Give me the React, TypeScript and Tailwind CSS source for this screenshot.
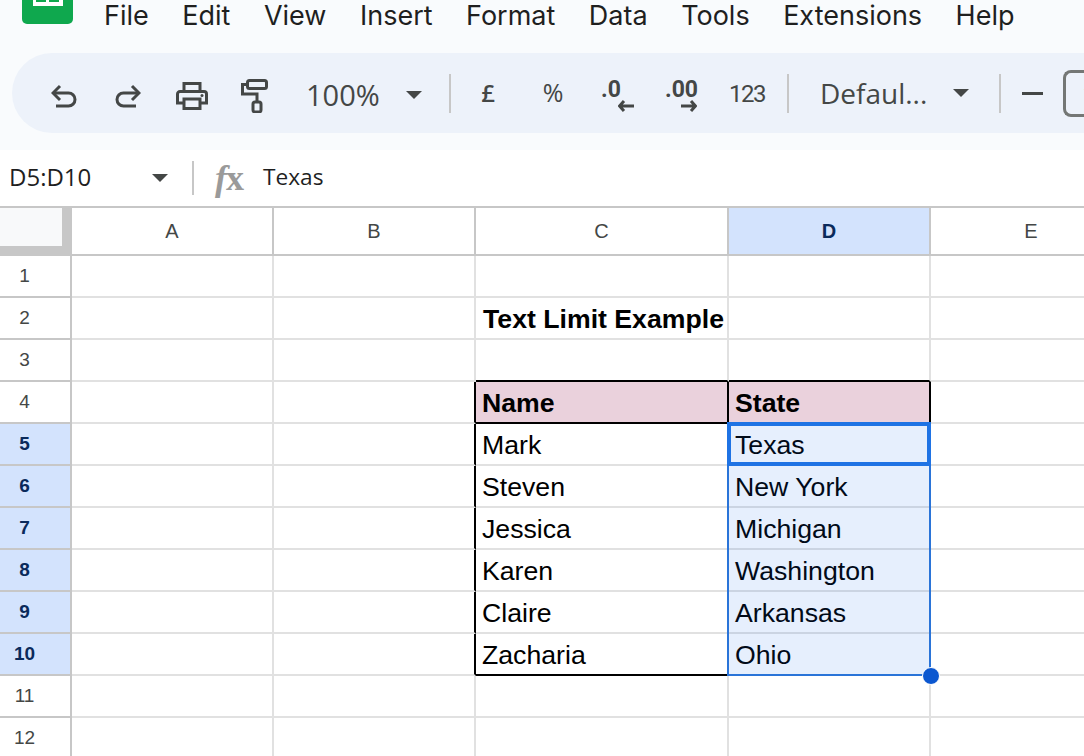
import { ReactNode } from "react";

const columns = ["A", "B", "C", "D", "E"];
const menus = ["File", "Edit", "View", "Insert", "Format", "Data", "Tools", "Extensions", "Help"];

// row number -> text by column
const rows: Record<number, Record<string, string>> = {
  2: { C: "Text Limit Example" },
  4: { C: "Name", D: "State" },
  5: { C: "Mark", D: "Texas" },
  6: { C: "Steven", D: "New York" },
  7: { C: "Jessica", D: "Michigan" },
  8: { C: "Karen", D: "Washington" },
  9: { C: "Claire", D: "Arkansas" },
  10: { C: "Zacharia", D: "Ohio" },
};

function cellClass(col: string, row: number) {
  const inTable = row >= 4 && row <= 10;
  const blackRight = (col === "B" || col === "C" || col === "D") && inTable;
  const blackBottom = (col === "C" || col === "D") && (row === 3 || row === 4 || row === 10);
  return [
    "flex items-end overflow-hidden whitespace-nowrap border-r-2 border-b-2 px-[6px] pb-[2px] text-[26.67px] leading-[34px] text-black",
    blackRight ? "border-r-black" : "border-r-[#e1e1e1]",
    blackBottom ? "border-b-black" : "border-b-[#e1e1e1]",
    row === 4 && (col === "C" || col === "D") ? "bg-[#ead1dc] font-bold" : "",
    row === 2 ? "font-bold pl-[7px]" : "",
  ].join(" ");
}

function Caret({ className = "" }: { className?: string }) {
  return (
    <svg width="16" height="8" viewBox="0 0 16 8" className={`shrink-0 ${className}`}>
      <path d="M0 0h16L8 8z" fill="#444746" />
    </svg>
  );
}

function Divider({ className = "" }: { className?: string }) {
  return <div className={`h-[39px] w-[2px] shrink-0 bg-[#c7c7c7] ${className}`} />;
}

function Slot({ width, children }: { width: string; children: ReactNode }) {
  return <div className={`flex shrink-0 translate-y-[3px] items-center justify-center ${width}`}>{children}</div>;
}

function Toolbar() {
  return (
    <div className="ml-3 mt-[21px] flex h-[80px] items-center rounded-l-[40px] bg-[#edf2fa] pl-[20px] font-['Open_Sans',sans-serif] text-[#444746]">
      <Slot width="w-[64px]">
        <svg width="26" height="24" viewBox="0 0 26 24" fill="none" stroke="#444746" strokeWidth="3">
          <path d="M9 2 2 9l7 7" />
          <path d="M2 9h15.5a6.5 6.5 0 0 1 0 13H5" />
        </svg>
      </Slot>
      <Slot width="w-[64px]">
        <svg width="26" height="24" viewBox="0 0 26 24" fill="none" stroke="#444746" strokeWidth="3">
          <path d="m17 2 7 7-7 7" />
          <path d="M24 9H8.5a6.5 6.5 0 0 0 0 13H21" />
        </svg>
      </Slot>
      <Slot width="w-[64px]">
        <svg width="32" height="28" viewBox="0 0 32 28" fill="none" stroke="#444746" strokeWidth="3">
          <path d="M8 10V1.5h16V10" />
          <path d="M8 21H1.500V12a2.500 2.500 0 0 1 2.500-2.500h24a2.500 2.500 0 0 1 2.500 2.500v9H24" />
          <path d="M8 17h16v9.500H8z" />
          <circle cx="26" cy="13.500" r="1.500" fill="#444746" stroke="none" />
        </svg>
      </Slot>
      <Slot width="w-[60px]">
        <svg width="28" height="34" viewBox="0 0 28 34" fill="none" stroke="#444746" strokeWidth="3">
          <rect x="7.500" y="1.500" width="19" height="8" rx="2" />
          <path d="M7 5.500H2.500v9.500H17v7" />
          <rect x="13" y="23" width="8" height="10" rx="2" />
        </svg>
      </Slot>
      <span className="ml-[22px] w-[74px] shrink-0 translate-y-[1px] text-[29px] leading-none">100%</span>
      <Caret className="ml-[26px] translate-y-[2px]" />
      <Divider className="ml-[27px]" />
      <div className="ml-[17px] w-[40px] shrink-0 text-center text-[24px] font-semibold leading-none">£</div>
      <div className="ml-[25px] w-[40px] shrink-0 -translate-y-[1px] text-center text-[25px] leading-none">%</div>
      <div className="relative ml-[28px] w-[18px] shrink-0 -translate-y-[4px] font-['Roboto',sans-serif] text-[23px] font-bold leading-none">
        <span>.0</span>
        <svg width="16" height="12" viewBox="0 0 16 12" className="absolute left-[17px] top-[22px]" fill="none" stroke="#444746" strokeWidth="3">
          <path d="M6 1 1.500 6 6 11M2 6h14" />
        </svg>
      </div>
      <div className="relative ml-[46px] w-[33px] shrink-0 -translate-y-[4px] font-['Roboto',sans-serif] text-[23px] font-bold leading-none">
        <span>.00</span>
        <svg width="16" height="12" viewBox="0 0 16 12" className="absolute left-[16px] top-[22px]" fill="none" stroke="#444746" strokeWidth="3">
          <path d="m10 1 4.500 5-4.500 5M14 6H0" />
        </svg>
      </div>
      <span className="ml-[31px] w-[36px] shrink-0 translate-y-[1px] font-['Roboto',sans-serif] text-[24px] leading-none tracking-[-1.5px]">123</span>
      <Divider className="ml-[22px]" />
      <span className="ml-[31px] w-[105px] shrink-0 whitespace-nowrap text-[28px] leading-none">Defaul...</span>
      <Caret className="ml-[28px]" />
      <Divider className="ml-[30px]" />
      <div className="ml-[21px] h-[3px] w-[21px] shrink-0 bg-[#444746]" />
      <div className="ml-[20px] h-[47px] w-[40px] shrink-0 rounded-l-[8px] border-[3px] border-r-0 border-[#747775] pl-[16px] text-[24px] leading-[41px]">
        10
      </div>
    </div>
  );
}

function Header() {
  return (
    <div className="h-[150px] overflow-hidden bg-[#f9fbfd]">
      <div className="flex h-[32px] items-start">
        <div className="ml-[22px] flex h-[24px] w-[51px] shrink-0 justify-center rounded-b-[5px] bg-[#0fa84e]">
          <div className="flex h-[6px] w-[30px] justify-center gap-[3px] bg-white">
            <div className="h-[2px] w-[10px] bg-[#0fa84e]" />
            <div className="h-[2px] w-[10px] bg-[#0fa84e]" />
          </div>
        </div>
        <nav className="ml-[31px] flex gap-[33.500px] font-['Inter',sans-serif] text-[27px] leading-[32px] text-[#1f1f1f]">
          {menus.map((m) => (
            <span key={m}>{m}</span>
          ))}
        </nav>
      </div>
      <Toolbar />
    </div>
  );
}

function FormulaBar() {
  return (
    <div className="flex h-[56px] items-center bg-white">
      <span className="ml-[9px] w-[83px] shrink-0 -translate-y-[1px] font-['Open_Sans',sans-serif] text-[24px] leading-none text-[#1f1f1f]">D5:D10</span>
      <Caret className="ml-[60px]" />
      <div className="ml-[24px] h-[34px] w-[2px] shrink-0 bg-[#c7c7c7]" />
      <div className="ml-[21px] flex w-[30px] shrink-0 items-baseline whitespace-nowrap font-['Liberation_Serif',serif] text-[36px] leading-none text-[#9a9a9a]">
        <i className="font-bold">f</i>
        <b className="-ml-[1px]">x</b>
      </div>
      <span className="ml-[18px] -translate-y-[1px] font-['Open_Sans',sans-serif] text-[22.700px] leading-none text-[#1f1f1f]">Texas</span>
    </div>
  );
}

function Grid() {
  const rowNumbers = Array.from({ length: 12 }, (_, i) => i + 1);
  return (
    <div className="relative grid grid-cols-[72px_202px_202px_253px_202px_202px] grid-rows-[48px_repeat(12,42px)] border-t-2 border-[#c7c7c7] bg-white font-['Liberation_Sans',sans-serif]">
      <div className="border-r-[10px] border-b-[10px] border-[#c7c7c7] bg-[#f8f9fa]" />
      {columns.map((c) => (
        <div
          key={c}
          className={`flex items-center justify-center border-b-2 border-r-2 border-[#c7c7c7] text-[20px] ${
            c === "D" ? "bg-[#d3e3fd] font-bold text-[#0a2a5b]" : "text-[#444746]"
          }`}
        >
          {c}
        </div>
      ))}
      {rowNumbers.map((r) => {
        const selected = r >= 5 && r <= 10;
        return [
          <div
            key={`h${r}`}
            className={`flex items-center justify-center border-b-2 border-r-2 border-[#c7c7c7] pr-[21px] text-[19px] ${
              selected ? "bg-[#d3e3fd] font-bold text-[#0a2a5b]" : "text-[#444746]"
            }`}
          >
            {r}
          </div>,
          ...columns.map((c) => (
            <div key={`${c}${r}`} className={cellClass(c, r)}>
              {rows[r]?.[c]}
            </div>
          )),
        ];
      })}
      {/* selected range, active cell and fill handle sit over the cells */}
      <div className="pointer-events-none absolute left-[727px] top-[214px] h-[254px] w-[204px] border-2 border-[#2a74d8] bg-[#0e65eb]/10" />
      <div className="pointer-events-none absolute left-[727px] top-[214px] h-[44px] w-[204px] border-4 border-[#1f73e4]" />
      <div className="absolute left-[922px] top-[459px] h-[18px] w-[18px] rounded-full border border-white bg-[#0b57d0]" />
    </div>
  );
}

export default function App() {
  return (
    <div className="h-[756px] w-[1084px] overflow-hidden bg-white">
      <Header />
      <FormulaBar />
      <Grid />
    </div>
  );
}
